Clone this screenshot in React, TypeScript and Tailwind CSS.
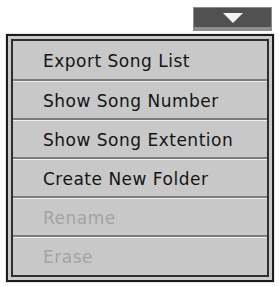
const items = [
  { label: "Export Song List", enabled: true },
  { label: "Show Song Number", enabled: true },
  { label: "Show Song Extention", enabled: true },
  { label: "Create New Folder", enabled: true },
  { label: "Rename", enabled: false },
  { label: "Erase", enabled: false },
];

export default function App() {
  return (
    <div
      className="w-[279px] h-[287px] bg-white"
      style={{ fontFamily: '"DejaVu Sans", Verdana, sans-serif' }}
    >
      <div className="flex justify-end pt-[7px] pr-[7px]">
        <button className="w-[79px] h-[24px] border border-[#8c8c8c] bg-[#515151] flex flex-col">
          <div className="flex-1 flex items-center justify-center">
            <svg width="20" height="10" viewBox="0 0 20 10">
              <polygon points="0,0 20,0 10,10" fill="#f4f4f4" />
            </svg>
          </div>
          <div className="h-[3px] bg-[#8e8e8e]" />
        </button>
      </div>

      <div className="ml-[5px] mt-[2px] w-[270px] border border-[#e4e4e4]">
        <div className="border-2 border-[#1c1c1c] bg-[#c9c9c9] p-[3px]">
          <div className="border-2 border-[#2e2e2e] bg-[#c8c8c8]">
            {items.map((item, i) => {
              const last = i === items.length - 1;
              const h = i === 0 ? "h-[40px]" : last ? "h-[37px]" : "h-[38px]";
              return (
                <div
                  key={i}
                  className={
                    last
                      ? `${h} flex items-center pl-[30px] pt-[3px]`
                      : `${h} border-b-2 border-[#7c7c7c] shadow-[0_1px_0_#f0f0f0] mb-[1px] flex items-center pl-[30px] pt-[3px]`
                  }
                >
                  <span
                    className={
                      item.enabled
                        ? "text-[17px] tracking-[0.5px] text-[#141414]"
                        : "text-[17px] tracking-[0.5px] text-[#a3a3a3]"
                    }
                  >
                    {item.label}
                  </span>
                </div>
              );
            })}
          </div>
        </div>
      </div>
    </div>
  );
}
